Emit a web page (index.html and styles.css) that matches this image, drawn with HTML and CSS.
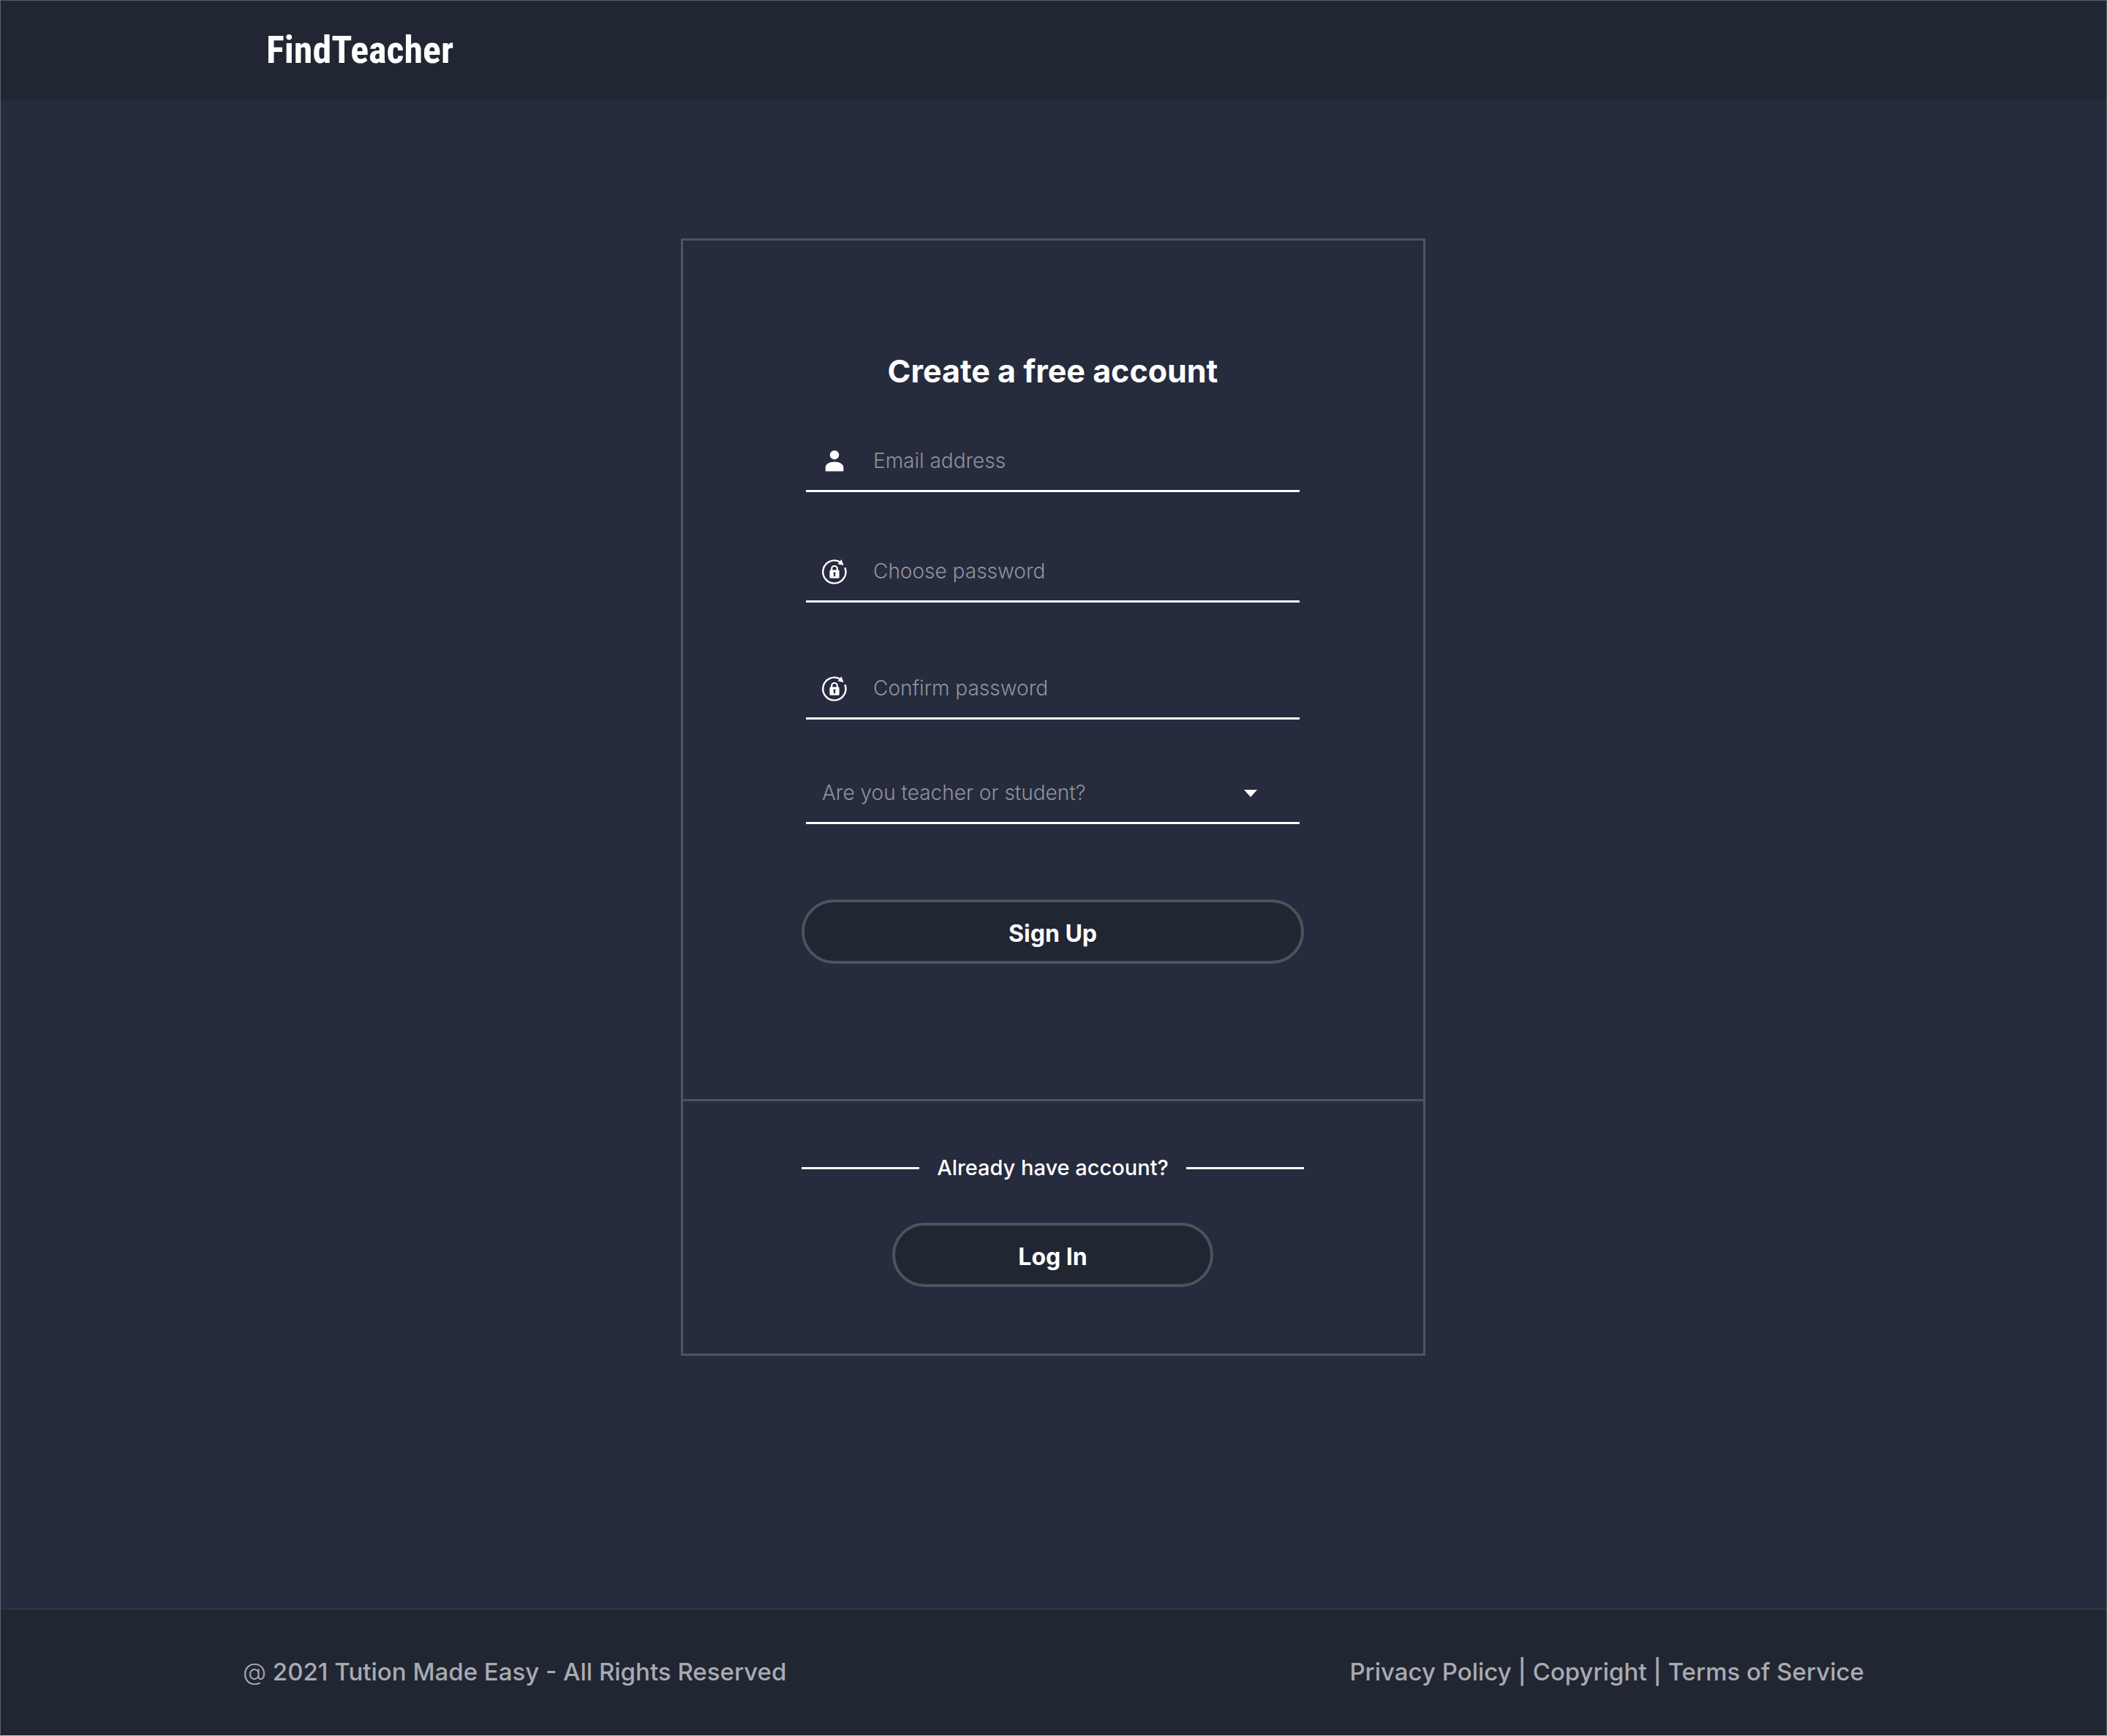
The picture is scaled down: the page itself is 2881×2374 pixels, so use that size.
FILE: index.html
```html
<!DOCTYPE html>
<html lang="en">
<head>
  <meta charset="utf-8">
  <meta name="viewport" content="width=device-width, initial-scale=1">
  <title>FindTeacher – Sign up</title>
  <link rel="stylesheet" href="styles.css">
</head>
<body>
  <svg class="sprite" aria-hidden="true">
    <symbol id="icon-lock" viewBox="0 0 34 34" overflow="visible">
      <path d="M31.3 12.2 A15.6 15.6 0 1 1 24.4 4.4" fill="none" stroke="currentColor" stroke-width="2.4"/>
      <path d="M26.4 1 L29.6 9 L21.6 7.6 Z" fill="currentColor"/>
      <path d="M13.2 16.5 v-2.7 a3.8 3.8 0 0 1 7.6 0 v2.7" fill="none" stroke="currentColor" stroke-width="2.2"/>
      <path fill-rule="evenodd" fill="currentColor" d="M11.8 15.6 h10.4 a1.4 1.4 0 0 1 1.4 1.4 v8.4 a1.4 1.4 0 0 1 -1.4 1.4 h-10.4 a1.4 1.4 0 0 1 -1.4 -1.4 v-8.4 a1.4 1.4 0 0 1 1.4 -1.4 z M17 18.4 a1.7 1.7 0 0 0 -0.9 3.1 l-0.4 2.7 h2.6 l-0.4 -2.7 a1.7 1.7 0 0 0 -0.9 -3.1 z"/>
    </symbol>
  </svg>

  <header class="site-header">
    <div class="container">
      <a class="logo" href="#">FindTeacher</a>
    </div>
  </header>

  <main class="page">
    <section class="card">
      <form class="signup">
        <h1 class="title">Create a free account</h1>

        <label class="field field-email">
          <svg class="icon" viewBox="0 0 34 34" aria-hidden="true">
            <circle cx="17" cy="9.2" r="6.2" fill="currentColor"/>
            <path d="M4.7 31.4 V26 C4.7 21.6 10.4 18.6 17 18.6 S29.3 21.6 29.3 26 V31.4 Z" fill="currentColor"/>
          </svg>
          <input class="control" type="email" placeholder="Email address" aria-label="Email address">
        </label>

        <label class="field field-password">
          <svg class="icon" aria-hidden="true"><use href="#icon-lock"/></svg>
          <input class="control" type="password" placeholder="Choose password" aria-label="Choose password">
        </label>

        <label class="field field-confirm">
          <svg class="icon" aria-hidden="true"><use href="#icon-lock"/></svg>
          <input class="control" type="password" placeholder="Confirm password" aria-label="Confirm password">
        </label>

        <label class="field field-role">
          <select class="control" aria-label="Are you teacher or student?">
            <option value="">Are you teacher or student?</option>
            <option>Teacher</option>
            <option>Student</option>
          </select>
          <svg class="caret" viewBox="0 0 18 12" aria-hidden="true"><path d="M0 2 H18 L9 12 Z" fill="currentColor"/></svg>
        </label>

        <button class="button" type="submit">Sign Up</button>
      </form>

      <div class="login">
        <p class="prompt">Already have account?</p>
        <button class="button button-login" type="button">Log In</button>
      </div>
    </section>
  </main>

  <footer class="site-footer">
    <div class="container footer-row">
      <p class="copyright"><span class="at">@</span> 2021 Tution Made Easy - All Rights Reserved</p>
      <nav class="links">
        <a href="#">Privacy Policy</a> | <a href="#">Copyright</a> | <a href="#">Terms of Service</a>
      </nav>
    </div>
  </footer>
</body>
</html>
```

FILE: styles.css
```css
* {
  box-sizing: border-box;
}

body {
  margin: 0;
  min-height: 100vh;
  display: flex;
  flex-direction: column;
  border: 1px solid #5c616b;
  border-bottom-color: #c6c8cc;
  background: #262b3d;
  color: #fff;
  font-family: Inter, "Open Sans", sans-serif;
}

h1,
p {
  margin: 0;
}

a {
  color: inherit;
  text-decoration: none;
}

.sprite {
  position: absolute;
  width: 0;
  height: 0;
}

.container {
  width: min(2217px, 100% - 48px);
  margin: 0 auto;
}

.site-header {
  height: 136px;
  display: flex;
  align-items: center;
  background: #212633;
}

.logo {
  padding-left: 32px;
  font: bold 52px/60px "Roboto Condensed", Roboto, sans-serif;
}

.page {
  flex: 1;
  padding: 189px 25px 120px 24px;
}

.card {
  max-width: 1018px;
  margin: 0 auto;
  border: 3px solid #4f5362;
}

.signup,
.login {
  display: flex;
  flex-direction: column;
}

.signup {
  padding: 154px 163px 185px 162px;
}

.title {
  margin-bottom: 59px;
  font-size: 43px;
  font-weight: 700;
  line-height: 48px;
  text-align: center;
}

.field {
  display: flex;
  align-items: center;
  height: 83px;
  margin: 0 6px;
  padding-left: 22px;
  border-bottom: 3px solid #fff;
}

.field-email {
  margin-bottom: 68px;
}

.field-password {
  margin-bottom: 77px;
}

.field-confirm {
  margin-bottom: 60px;
}

.field-role {
  margin-bottom: 103px;
  padding-right: 58px;
}

.icon {
  flex: none;
  width: 34px;
  height: 34px;
  margin-right: 36px;
  overflow: visible;
}

.caret {
  flex: none;
  width: 18px;
  height: 12px;
}

.control {
  flex: 1;
  min-width: 0;
  height: 60px;
  padding: 0;
  border: 0;
  outline: 0;
  appearance: none;
  background: transparent;
  color: #8f929b;
  font: 300 28px/32px Inter, "Open Sans", sans-serif;
}

.control::placeholder {
  color: #8f929b;
  opacity: 1;
}

.button {
  height: 88px;
  padding: 5px 0 0;
  border: 4px solid #4f525d;
  border-radius: 44px;
  background: #212633;
  color: #fff;
  font: 700 32px/36px Inter, "Open Sans", sans-serif;
}

.login {
  padding: 75px 163px 91px 162px;
  border-top: 3px solid #4f5362;
}

.prompt {
  display: flex;
  align-items: center;
  gap: 24px;
  margin-bottom: 59px;
  font-size: 29px;
  font-weight: 500;
  line-height: 32px;
}

.prompt::before,
.prompt::after {
  content: "";
  flex: 1;
  height: 3px;
  background: #fff;
}

.button-login {
  width: 439px;
  align-self: center;
}

.site-footer {
  height: 173px;
  display: flex;
  align-items: center;
  padding-bottom: 2px;
  border-top: 1px solid #3c404e;
  background: #212633;
  color: #a9abb0;
  font-size: 33px;
  font-weight: 500;
  line-height: 40px;
}

.footer-row {
  display: flex;
  justify-content: space-between;
}

.at {
  font-weight: 300;
}
```
